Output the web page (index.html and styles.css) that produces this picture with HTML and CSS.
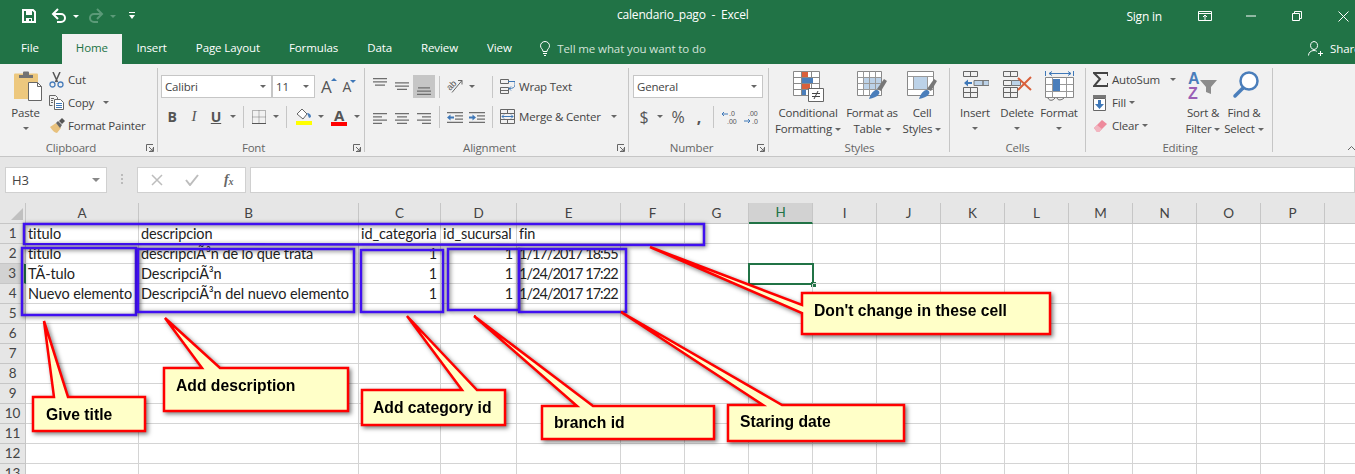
FILE: index.html
```html
<!DOCTYPE html>
<html>
<head>
    <title>calendario_pago - Excel</title>
    <link rel="stylesheet" href="styles.css">
</head>
<body>
<div class="app">
    <header class="titlebar">
        <div class="qat">
            <svg width="16" height="16" viewBox="0 0 16 16"><path class="w2" d="M2 2h10l2 2v10H2z"/><path class="wf" d="M5 2h6v5H5zM5 10h6v4H5z"/><path class="gf" d="M8 11h2v2H8z"/></svg>
            <svg class="undo" width="16" height="16" viewBox="0 0 16 16"><path class="w2" d="M2 6h8a4 4 0 0 1 0 8H6"/><path class="w2" d="M7 1L2 6l5 5"/></svg>
            <span class="caret white"></span>
            <svg class="redo" width="16" height="16" viewBox="0 0 16 16"><path class="dim2" d="M14 6H6a4 4 0 0 0 0 8h4"/><path class="dim2" d="M9 1l5 5-5 5"/></svg>
            <span class="caret dim"></span>
            <svg class="custom" width="8" height="8" viewBox="0 0 8 8"><path class="wf" d="M1 0h6v1H1zM1 3h6L4 7z"/></svg>
        </div>
        <div class="doc-title">calendario_pago &nbsp;-&nbsp; Excel</div>
        <div class="win-controls">
            <span class="signin">Sign in</span>
            <svg width="14" height="10" viewBox="0 0 14 10"><path class="w1" d="M.5.5h13v9H.5zM.5 2.500h13M7 9V4.500M5 6l2-2 2 2"/></svg>
            <svg width="10" height="2" viewBox="0 0 10 2"><path class="w1" d="M0 1h10"/></svg>
            <svg width="10" height="10" viewBox="0 0 10 10"><path class="w1" d="M.5 2.500h7v7h-7zM2.500 2.500v-2h7v7h-2"/></svg>
            <svg width="11" height="11" viewBox="0 0 11 11"><path class="w1" d="M.5.5l10 10M10.500.5l-10 10"/></svg>
        </div>
    </header>

    <nav class="tabs">
        <span class="tab file">File</span>
        <span class="tab active">Home</span>
        <span class="tab">Insert</span>
        <span class="tab">Page Layout</span>
        <span class="tab">Formulas</span>
        <span class="tab">Data</span>
        <span class="tab">Review</span>
        <span class="tab">View</span>
        <span class="tell">
            <svg width="10" height="15" viewBox="0 0 10 15"><path class="w1" d="M3 10.500C3 8 .5 7.500.5 4.800a4.500 4.300 0 0 1 9 0C9.500 7.500 7 8 7 10.500zM3 12.500h4M4 14.500h2"/></svg>
            Tell me what you want to do
        </span>
        <span class="share">
            <svg width="15" height="15" viewBox="0 0 15 15"><path class="w1" d="M6 8.500a3.500 4 0 1 1 .1 0zM.5 14.500c0-3 2.500-5 5.500-5 1 0 2 .3 2.800.8M10 12.500h5M12.500 10v5"/></svg>
            Share
        </span>
    </nav>

    <section class="ribbon">
        <div class="group g-clip">
            <div class="group-body">
                <div class="big paste">
                    <div class="big-icon">
                        <svg width="30" height="31" viewBox="0 0 30 31"><path d="M1 3.500q0-1 1-1h22q1 0 1 1V28H1z" fill="#edc87e"/><path d="M6 7V4h4V1.500q0-1 1-1h4q1 0 1 1V4h4v3z" fill="#737373"/><path d="M15.500 11.500h9l4 4v14h-13z" fill="#fff" stroke="#666"/><path class="st" d="M24.500 11.500v4h4"/></svg>
                    </div>
                    <span>Paste</span>
                    <span class="caret"></span>
                </div>
                <div class="stack">
                    <div class="row">
                        <svg class="row-icon" width="15" height="16" viewBox="0 0 15 16"><path d="M4 0l4.500 10M11 0L6.500 10" stroke="#555" stroke-width="1.500" fill="none"/><circle cx="3.500" cy="12.500" r="2.500" fill="none" stroke="#4a7ebb" stroke-width="1.300"/><circle cx="11.500" cy="12.500" r="2.500" fill="none" stroke="#4a7ebb" stroke-width="1.300"/></svg>
                        Cut
                    </div>
                    <div class="row">
                        <svg class="row-icon" width="15" height="15" viewBox="0 0 15 15"><path class="st" d="M.5.5h6l2 2v2M.5.5v10h3M2 3.500h3M2 5.500h2M2 7.500h2"/><path d="M5.500 4.500h6l3 3v7h-9z" fill="#fff" stroke="#666"/><path class="bl" d="M7 8.500h6M7 10.500h6M7 12.500h6"/></svg>
                        Copy <span class="caret spaced"></span>
                    </div>
                    <div class="row">
                        <svg class="row-icon" width="16" height="15" viewBox="0 0 16 15"><path d="M1 9l6-4 5 5-4 5c-2 0-5-3-7-6z" fill="#e8c17d"/><path d="M7 5l2-2 4 4-2 3z" fill="#666"/><path d="M10 3l3-3 3 3-3 3z" fill="#555"/></svg>
                        Format Painter
                    </div>
                </div>
            </div>
            <div class="group-foot"><span class="group-name">Clipboard</span><svg class="launcher" width="8" height="8" viewBox="0 0 8 8"><path class="st" d="M.5 7V.5H7M7.500 3v4.500H3"/><path d="M3 3l4 4M4 7h3V4" stroke="#666" fill="none"/></svg></div>
        </div>

        <div class="group g-font">
            <div class="group-body col">
                <div class="tool-row">
                    <div class="select font-name">Calibri<span class="caret"></span></div>
                    <div class="select font-size">11<span class="caret"></span></div>
                    <span class="grow">A<i class="up"></i></span>
                    <span class="shrink">A<i class="down"></i></span>
                </div>
                <div class="tool-row">
                    <span class="ic b">B</span>
                    <span class="ic it">I</span>
                    <span class="ic un">U</span>
                    <span class="caret-btn"><span class="caret"></span></span>
                    <span class="sep"></span>
                    <span class="ic"><svg width="14" height="14" viewBox="0 0 14 14"><path d="M.5.500h13v13H.5zM7 .5v13M.5 7h13" fill="none" stroke="#777" stroke-dasharray="1 1"/><path d="M0 13.500h14" stroke="#555"/></svg></span>
                    <span class="caret-btn"><span class="caret"></span></span>
                    <span class="sep"></span>
                    <span class="ic wide"><svg width="17" height="17" viewBox="0 0 17 17"><path d="M7 1l5 5-4 5-6-5z" fill="#fff" stroke="#666"/><path d="M12 5c2 0 4 1 4 4l-2 1z" fill="#4a7ebb"/><path d="M1 13h16v4H1z" fill="#ff0"/></svg></span>
                    <span class="caret-btn"><span class="caret"></span></span>
                    <span class="ic wide color">A<i></i></span>
                    <span class="caret-btn"><span class="caret"></span></span>
                </div>
            </div>
            <div class="group-foot"><span class="group-name">Font</span><svg class="launcher" width="8" height="8" viewBox="0 0 8 8"><path class="st" d="M.5 7V.5H7M7.500 3v4.500H3"/><path d="M3 3l4 4M4 7h3V4" stroke="#666" fill="none"/></svg></div>
        </div>

        <div class="group g-align">
            <div class="group-body col">
                <div class="tool-row">
                    <span class="ic"><svg width="14" height="17" viewBox="0 0 14 17"><path class="line" d="M0 .5h14M0 3.800h14M2 7.100h10"/></svg></span>
                    <span class="ic"><svg width="14" height="17" viewBox="0 0 14 17"><path class="line" d="M0 4.800h14M0 8.100h14M2 11.400h10"/></svg></span>
                    <span class="ic on"><svg width="14" height="17" viewBox="0 0 14 17"><path class="line" d="M1 9.800h12M0 13.100h14M0 16.400h14"/></svg></span>
                    <span class="sep"></span>
                    <span class="ic"><svg width="22" height="22" viewBox="-4 -4 22 22"><text class="ab" transform="translate(2 11) rotate(-45)">ab</text><path class="st" d="M4 12.500L14 .5M10 .5h4v4"/></svg></span>
                    <span class="caret-btn"><span class="caret"></span></span>
                    <span class="sep far"></span>
                    <span class="labeled">
                        <svg width="15" height="15" viewBox="0 0 15 15"><path class="st" d="M.5.500h8v4h-8zM.5 8.500h8v6h-8zM.5 11.500h8"/><path class="bl" d="M8 2.500h7M15 2.500v3c0 3-2 4-6 4M11 7.500l-2 2 2 2"/></svg>
                        Wrap Text
                    </span>
                </div>
                <div class="tool-row">
                    <span class="ic low"><svg width="14" height="11" viewBox="0 0 14 11"><path class="line" d="M0 .5h14M0 3.800h9M0 7.100h14M0 10.400h9"/></svg></span>
                    <span class="ic low"><svg width="14" height="11" viewBox="0 0 14 11"><path class="line" d="M0 .5h14M2 3.800h10M0 7.100h14M2 10.400h10"/></svg></span>
                    <span class="ic low"><svg width="14" height="11" viewBox="0 0 14 11"><path class="line" d="M0 .5h14M5 3.800h9M0 7.100h14M5 10.400h9"/></svg></span>
                    <span class="sep"></span>
                    <span class="ic low"><svg width="16" height="12" viewBox="0 0 16 12"><path class="line" d="M0 .5h16M8 3.800h8M8 7.100h8M0 10.400h16"/><path class="blf" d="M0 5.500l3.500-3v2H7v2H3.500v2z"/></svg></span>
                    <span class="ic low"><svg width="16" height="12" viewBox="0 0 16 12"><path class="line" d="M0 .5h16M8 3.800h8M8 7.100h8M0 10.400h16"/><path class="blf" d="M7 5.500l-3.500-3v2H0v2h3.500v2z"/></svg></span>
                    <span class="sep"></span>
                    <span class="labeled">
                        <svg width="15" height="15" viewBox="0 0 15 15"><path class="st" d="M.5.500h14v14H.5zM.5 4.500h14M.5 10.500h14M7.500.5v4M7.500 10.500v4"/><path class="bl" d="M2 7.500h11M4 5.500l-2 2 2 2M11 5.500l2 2-2 2"/></svg>
                        Merge &amp; Center <span class="caret spaced wide-gap"></span>
                    </span>
                </div>
            </div>
            <div class="group-foot"><span class="group-name">Alignment</span><svg class="launcher" width="8" height="8" viewBox="0 0 8 8"><path class="st" d="M.5 7V.5H7M7.500 3v4.500H3"/><path d="M3 3l4 4M4 7h3V4" stroke="#666" fill="none"/></svg></div>
        </div>

        <div class="group g-num">
            <div class="group-body col">
                <div class="tool-row">
                    <div class="select num-format">General<span class="caret"></span></div>
                </div>
                <div class="tool-row">
                    <span class="ic sym">$</span>
                    <span class="caret-btn narrow"><span class="caret"></span></span>
                    <span class="ic sym pct">%</span>
                    <span class="ic sym comma">,</span>
                    <span class="sep"></span>
                    <span class="ic"><svg width="16" height="16" viewBox="0 0 16 16"><text class="dec" x="8" y="7">.0</text><text class="dec" x="6" y="15">.00</text><path class="bl" d="M1 5h6M3 3L1 5l2 2"/></svg></span>
                    <span class="ic"><svg width="16" height="16" viewBox="0 0 16 16"><text class="dec" x="5" y="7">.00</text><text class="dec" x="9" y="15">.0</text><path class="bl" d="M1 12h6M5 10l2 2-2 2"/></svg></span>
                </div>
            </div>
            <div class="group-foot"><span class="group-name">Number</span><svg class="launcher" width="8" height="8" viewBox="0 0 8 8"><path class="st" d="M.5 7V.5H7M7.500 3v4.500H3"/><path d="M3 3l4 4M4 7h3V4" stroke="#666" fill="none"/></svg></div>
        </div>

        <div class="group g-styles">
            <div class="group-body">
                <div class="big cf">
                    <div class="big-icon">
                        <svg width="31" height="31" viewBox="0 0 31 31"><path d="M.5.5h26v24H.5zM.5 6.500h26M.5 12.500h26M.5 18.500h26M8.500.5v24M18.500.5v24" fill="#fff" stroke="#888"/><path d="M9 1h6v5H9z" fill="#d9603b"/><path d="M9 7h11v5H9z" fill="#4a7ebb"/><path d="M9 13h8v5H9z" fill="#d9603b"/><path d="M9 19h4v5H9z" fill="#4a7ebb"/><path d="M15.500 17.500h15v13h-15z" fill="#fff" stroke="#666"/><path d="M19 22.500h8M19 25.500h8M25 20l-4 8" stroke="#444" fill="none"/></svg>
                    </div>
                    <span>Conditional</span>
                    <span>Formatting<span class="caret tight"></span></span>
                </div>
                <div class="big fat">
                    <div class="big-icon">
                        <svg width="30" height="29" viewBox="0 0 30 29"><path d="M.5.5h24v24H.5z" fill="#fff" stroke="#888"/><path d="M7 6h17v13H7z" fill="#bcd2e8"/><path d="M.5 6.500h24M.5 12.500h24M.5 18.500h24M6.500.5v24M12.500.5v24M18.500.5v24" fill="none" stroke="#999"/><path d="M20 18l7-10 3 2-6 10z" fill="#777"/><path d="M19 19c3 0 4 2 3 4-2 3-6 4-10 5 1-3 3-8 7-9z" fill="#4a7ebb"/></svg>
                    </div>
                    <span>Format as</span>
                    <span>Table<span class="caret tight"></span></span>
                </div>
                <div class="big cell">
                    <div class="big-icon">
                        <svg width="30" height="29" viewBox="0 0 30 29"><path d="M.5.5h26v24H.5z" fill="#fff" stroke="#888"/><path d="M7 6h14v12H7z" fill="#bcd2e8"/><path d="M.5 5.500h26M.5 18.500h26M6.500 5.500v13M20.500 5.500v13" fill="none" stroke="#999"/><path d="M20 18l7-10 3 2-6 10z" fill="#777"/><path d="M19 19c3 0 4 2 3 4-2 3-6 4-10 5 1-3 3-8 7-9z" fill="#4a7ebb"/></svg>
                    </div>
                    <span>Cell</span>
                    <span>Styles<span class="caret tight"></span></span>
                </div>
            </div>
            <div class="group-foot"><span class="group-name">Styles</span></div>
        </div>

        <div class="group g-cells">
            <div class="group-body">
                <div class="big cellbtn">
                    <div class="big-icon">
                        <svg width="27" height="27" viewBox="0 0 27 27"><path class="st" d="M1.500.5h14v5h-14zM8.500.5v5M1.500 16.500h14v10h-14zM1.500 21.500h14M8.500 16.500v10"/><path d="M12 9.500h9v5h-9zM21 9.500h6v5h-6z" fill="#bcd2e8" stroke="#777"/><path class="blf" d="M2 12l4-3.500V11h4v2H6v2.500z"/></svg>
                    </div>
                    <span>Insert</span>
                    <span class="caret"></span>
                </div>
                <div class="big cellbtn">
                    <div class="big-icon">
                        <svg width="30" height="27" viewBox="0 0 30 27"><path class="st" d="M1.500.5h14v5h-14zM8.500.5v5M1.500 16.500h14v10h-14zM1.500 21.500h14M8.500 16.500v10M1.500 9.500h8v5h-8z"/><path d="M9.500 9.500h9v5h-9z" fill="#bcd2e8" stroke="#777"/><path d="M16 7l13 12M29 6L16 19" stroke="#d9603b" stroke-width="2" fill="none"/></svg>
                    </div>
                    <span>Delete</span>
                    <span class="caret"></span>
                </div>
                <div class="big cellbtn">
                    <div class="big-icon">
                        <svg width="29" height="32" viewBox="0 0 29 32"><path class="bl" d="M4 2.500h22M7 .5l-3 2 3 2M23 .5l3 2-3 2M.5 0v5M28.500 0v5"/><path d="M.5 6.500h28v20h-28z" fill="#fff" stroke="#888"/><path d="M.5 13.500h28M.5 20.500h28M7.500 6.500v20M21.500 6.500v20" fill="none" stroke="#999"/><path d="M8 8h7v12H8z" fill="#4a7ebb"/><path class="st" d="M3 27c1 3 5 3 7 0M12 27c1 3 5 2 7 0"/></svg>
                    </div>
                    <span>Format</span>
                    <span class="caret"></span>
                </div>
            </div>
            <div class="group-foot"><span class="group-name">Cells</span></div>
        </div>

        <div class="group g-edit">
            <div class="group-body">
                <div class="stack">
                    <div class="row">
                        <svg class="row-icon" width="15" height="15" viewBox="0 0 15 15"><path d="M15 4V1H1l6 6-6 7h14v-3" fill="none" stroke="#444" stroke-width="2"/></svg>
                        AutoSum <span class="caret spaced sum"></span>
                    </div>
                    <div class="row">
                        <svg class="row-icon" width="14" height="16" viewBox="0 0 14 16"><path d="M.5 3.500h12v12H.5z" fill="#fff" stroke="#666"/><path d="M0 0h13v3H0z" fill="#777"/><path class="blf" d="M5 5h3v4h3l-4.500 5L2 9h3z"/></svg>
                        Fill<span class="caret tight"></span>
                    </div>
                    <div class="row">
                        <svg class="row-icon" width="15" height="14" viewBox="0 0 15 14"><path d="M1 9l8-8 5 4-8 8H4z" fill="#ee8a9c"/><path d="M1 9l3-3 5 4-3 3H4z" fill="#f2b5c0"/></svg>
                        Clear<span class="caret tight"></span>
                    </div>
                </div>
                <div class="big sort">
                    <div class="big-icon">
                        <svg width="30" height="30" viewBox="0 0 30 30"><text class="az" x="0" y="13" fill="#4a7ebb">A</text><text class="az" x="0" y="28" fill="#9a5fb5">Z</text><path d="M12 9h17l-6 7v7l-5-2v-5z" fill="#8c8c8c"/></svg>
                    </div>
                    <span>Sort &amp;</span>
                    <span>Filter<span class="caret tight"></span></span>
                </div>
                <div class="big find">
                    <div class="big-icon">
                        <svg width="30" height="30" viewBox="0 0 30 30"><circle cx="20" cy="10" r="8.500" fill="#fff" stroke="#4a7ebb" stroke-width="2.500"/><path d="M14 17L6 25" stroke="#4a7ebb" stroke-width="3.500" stroke-linecap="round" fill="none"/></svg>
                    </div>
                    <span>Find &amp;</span>
                    <span>Select<span class="caret tight"></span></span>
                </div>
            </div>
            <div class="group-foot"><span class="group-name">Editing</span></div>
        </div>

        <svg class="collapse" width="9" height="6" viewBox="0 0 9 6"><path class="st" d="M1 5l3.500-3.500L8 5"/></svg>
    </section>

    <section class="formula">
        <div class="namebox">H3<span class="caret big-caret"></span></div>
        <div class="grip"></div>
        <div class="fx-box">
            <svg width="12" height="12" viewBox="0 0 12 12"><path d="M1 1l10 10M11 1L1 11" stroke="#bdbdbd" stroke-width="1.500" fill="none"/></svg>
            <svg width="14" height="12" viewBox="0 0 14 12"><path d="M1 6l4 5 8-10" stroke="#bdbdbd" stroke-width="2" fill="none"/></svg>
            <span class="fx">f<sub>x</sub></span>
        </div>
        <div class="formula-input"></div>
    </section>

    <table class="sheet">
        <colgroup>
            <col class="c-h"><col class="c-a"><col class="c-b"><col class="c-c"><col class="c-d"><col class="c-e">
            <col class="c-n"><col class="c-n"><col class="c-n"><col class="c-n"><col class="c-n"><col class="c-n">
            <col class="c-n"><col class="c-n"><col class="c-n"><col class="c-n"><col class="c-n"><col class="c-n">
        </colgroup>
        <thead>
            <tr>
                <th class="corner"><i></i></th>
                <th>A</th><th>B</th><th>C</th><th>D</th><th>E</th><th>F</th><th>G</th><th class="cur">H</th><th>I</th><th>J</th><th>K</th><th>L</th><th>M</th><th>N</th><th>O</th><th>P</th><th></th>
            </tr>
        </thead>
        <tbody>
            <tr><th>1</th><td>titulo</td><td>descripcion</td><td>id_categoria</td><td>id_sucursal</td><td>fin</td><td></td><td></td><td></td><td></td><td></td><td></td><td></td><td></td><td></td><td></td><td></td><td></td></tr>
            <tr><th>2</th><td>titulo</td><td>descripciÃ³n de lo que trata</td><td class="num">1</td><td class="num">1</td><td class="num date">1/17/2017 18:55</td><td></td><td></td><td></td><td></td><td></td><td></td><td></td><td></td><td></td><td></td><td></td><td></td></tr>
            <tr><th class="cur">3</th><td>TÃ-tulo</td><td>DescripciÃ³n</td><td class="num">1</td><td class="num">1</td><td class="num date">1/24/2017 17:22</td><td></td><td></td><td class="selected"><i></i></td><td></td><td></td><td></td><td></td><td></td><td></td><td></td><td></td><td></td></tr>
            <tr><th>4</th><td>Nuevo elemento</td><td>DescripciÃ³n del nuevo elemento</td><td class="num">1</td><td class="num">1</td><td class="num date">1/24/2017 17:22</td><td></td><td></td><td></td><td></td><td></td><td></td><td></td><td></td><td></td><td></td><td></td><td></td></tr>
            <tr><th>5</th><td></td><td></td><td></td><td></td><td></td><td></td><td></td><td></td><td></td><td></td><td></td><td></td><td></td><td></td><td></td><td></td><td></td></tr>
            <tr><th>6</th><td></td><td></td><td></td><td></td><td></td><td></td><td></td><td></td><td></td><td></td><td></td><td></td><td></td><td></td><td></td><td></td><td></td></tr>
            <tr><th>7</th><td></td><td></td><td></td><td></td><td></td><td></td><td></td><td></td><td></td><td></td><td></td><td></td><td></td><td></td><td></td><td></td><td></td></tr>
            <tr><th>8</th><td></td><td></td><td></td><td></td><td></td><td></td><td></td><td></td><td></td><td></td><td></td><td></td><td></td><td></td><td></td><td></td><td></td></tr>
            <tr><th>9</th><td></td><td></td><td></td><td></td><td></td><td></td><td></td><td></td><td></td><td></td><td></td><td></td><td></td><td></td><td></td><td></td><td></td></tr>
            <tr><th>10</th><td></td><td></td><td></td><td></td><td></td><td></td><td></td><td></td><td></td><td></td><td></td><td></td><td></td><td></td><td></td><td></td><td></td></tr>
            <tr><th>11</th><td></td><td></td><td></td><td></td><td></td><td></td><td></td><td></td><td></td><td></td><td></td><td></td><td></td><td></td><td></td><td></td><td></td></tr>
            <tr><th>12</th><td></td><td></td><td></td><td></td><td></td><td></td><td></td><td></td><td></td><td></td><td></td><td></td><td></td><td></td><td></td><td></td><td></td></tr>
            <tr><th>13</th><td></td><td></td><td></td><td></td><td></td><td></td><td></td><td></td><td></td><td></td><td></td><td></td><td></td><td></td><td></td><td></td><td></td></tr>
        </tbody>
    </table>

    <!-- annotations pasted on top of the screenshot -->
    <svg class="notes" width="1355" height="474" viewBox="0 0 1355 474">
        <g class="boxes">
            <path d="M24 224H704V245L24 244z"/>
            <path d="M22 248H136V315H22z"/>
            <path d="M138 249H354V312H138z"/>
            <path d="M361 250H443V312H361z"/>
            <path d="M448 249H519V310H448z"/>
            <path d="M519 249H626V312H519z"/>
        </g>
        <g class="callout">
            <path d="M33 397H54L44 321 68 397H145V431H33z"/>
            <text x="46" y="420">Give title</text>
        </g>
        <g class="callout">
            <path d="M164 368H202L165 318 220 368H348V411H164z"/>
            <text x="176" y="391">Add description</text>
        </g>
        <g class="callout">
            <path d="M362 390H462L407 316 477 390H505V425H362z"/>
            <text x="373" y="413">Add category id</text>
        </g>
        <g class="callout">
            <path d="M542 406H577L474 316 593 406H714V439H542z"/>
            <text x="554" y="428">branch id</text>
        </g>
        <g class="callout">
            <path d="M728 405H763L621 312 782 405H904V441H728z"/>
            <text x="740" y="427">Staring date</text>
        </g>
        <g class="callout">
            <path d="M802 293H1050V334H802V313L650 247 802 305z"/>
            <text x="814" y="316">Don't change in these cell</text>
        </g>
    </svg>
</div>
</body>
</html>
```

FILE: styles.css
```css
html, body {
    margin: 0;
    padding: 0;
    overflow: hidden;
}

.app {
    position: relative;
    width: 1355px;
    height: 474px;
    overflow: hidden;
    background-color: #e6e6e6;
    font-family: 'Open Sans', sans-serif;
    font-size: 11.5px;
    letter-spacing: -0.2px;
    color: #444;
}

svg {
    display: block;
    flex: none;
}

/* svg paint helpers */
.w1 { fill: none; stroke: #fff; stroke-width: 1; }
.w2 { fill: none; stroke: #fff; stroke-width: 2; }
.wf { fill: #fff; }
.gf { fill: #217346; }
.dim2 { fill: none; stroke: #5b9a78; stroke-width: 2; }
.st { fill: none; stroke: #666; stroke-width: 1; }
.line { fill: none; stroke: #6e6e6e; stroke-width: 1.3; }
.bl { fill: none; stroke: #3f78b8; stroke-width: 1; }
.blf { fill: #3f78b8; }

.caret {
    display: inline-block;
    width: 0;
    height: 0;
    border-left: 3px solid transparent;
    border-right: 3px solid transparent;
    border-top: 3px solid #666;
    flex: none;
}

.caret.white { border-top-color: #fff; }
.caret.dim { border-top-color: #5b9a78; }
.caret.spaced { margin-left: 9px; vertical-align: middle; }
.caret.wide-gap { margin-left: 6px; }
.caret.sum { margin-left: 10px; }
.caret.tight { margin-left: 3px; vertical-align: middle; }

/* title bar */
.titlebar {
    height: 34px;
    background-color: #217346;
    color: #fff;
    display: flex;
    align-items: center;
    justify-content: space-between;
    padding-bottom: 2px;
    box-sizing: border-box;
    position: relative;
    font-size: 12px;
}

.qat {
    display: flex;
    align-items: center;
    padding-left: 21px;
}

.undo { margin-left: 14px; }
.qat .caret { margin-left: 6px; }
.redo { margin-left: 9px; }
.custom { margin-left: 12px; }

.doc-title {
    position: absolute;
    left: 617px;
    top: 6px;
}

.win-controls {
    display: flex;
    align-items: center;
}

.signin { margin-right: 36px; }
.win-controls svg:nth-of-type(1) { margin-right: 34px; }
.win-controls svg:nth-of-type(2) { margin-right: 36px; }
.win-controls svg:nth-of-type(3) { margin-right: 36px; }
.win-controls svg:nth-of-type(4) { margin-right: 6px; }

/* tabs */
.tabs {
    height: 30px;
    background-color: #217346;
    color: #fff;
    display: flex;
    align-items: stretch;
    padding-left: 6.5px;
    position: relative;
    letter-spacing: -0.1px;
}

.tab {
    padding: 0 14.5px;
    line-height: 28px;
    height: 30px;
    box-sizing: border-box;
}

.tab.file { margin-right: 8.5px; }

.tab.active {
    background-color: #f1f1f1;
    color: #217346;
    padding: 0 14px;
}

.tell {
    display: flex;
    align-items: center;
    gap: 7px;
    margin-left: 14px;
    color: #d3e3da;
    height: 28px;
}

.share {
    position: absolute;
    left: 1308px;
    top: 0;
    height: 28px;
    display: flex;
    align-items: center;
    gap: 7px;
}

/* ribbon */
.ribbon {
    height: 93px;
    box-sizing: border-box;
    background-color: #f1f1f1;
    border-bottom: 1px solid #c6c6c6;
    display: flex;
    padding-top: 4px;
    position: relative;
}

.group {
    height: 84px;
    box-sizing: border-box;
    border-right: 1px solid #c6c6c6;
    display: flex;
    flex-direction: column;
    flex: none;
}

.g-clip { width: 158px; padding-left: 3px; }
.g-font { width: 207px; padding-left: 3px; }
.g-align { width: 264px; padding-left: 4px; }
.g-num { width: 140px; padding-left: 4px; }
.g-styles { width: 181px; padding-left: 5px; }
.g-cells { width: 136px; padding-left: 4px; }
.g-edit { width: 187px; padding-left: 6px; }

.group-body {
    height: 73px;
    flex: none;
    display: flex;
}

.group-body.col {
    flex-direction: column;
    padding-top: 7px;
    gap: 7px;
    box-sizing: border-box;
}

.group-foot {
    display: flex;
    align-items: center;
    height: 14px;
    flex: none;
    margin-left: -4px;
}

.group-name {
    flex: 1;
    text-align: center;
    color: #666;
    line-height: 14px;
}

.launcher {
    margin-right: 3px;
    margin-left: 3px;
}

.big {
    display: flex;
    flex-direction: column;
    align-items: center;
    line-height: 16px;
    flex: none;
    white-space: nowrap;
}

.big > .caret { margin-top: 6px; }

.big-icon {
    height: 37px;
    display: flex;
    align-items: flex-start;
    justify-content: center;
    box-sizing: border-box;
    padding-top: 3px;
}

.paste { width: 45px; }
.paste .big-icon { padding-left: 4px; }
.cf { width: 68px; }
.fat { width: 60px; }
.cell { width: 40px; }
.cellbtn { width: 42px; }
.sort { width: 42px; }
.find { width: 40px; }

.stack {
    display: flex;
    flex-direction: column;
    flex: none;
}

.g-edit .stack { width: 90px; }

.row {
    height: 23px;
    display: grid;
    grid-template-columns: 20px auto auto;
    justify-content: start;
    align-items: center;
    white-space: nowrap;
}

.row-icon { margin-left: 1px; }

.tool-row {
    display: flex;
    align-items: center;
    height: 23px;
    white-space: nowrap;
}

.select {
    height: 23px;
    box-sizing: border-box;
    background-color: #fff;
    border: 1px solid #c6c6c6;
    display: flex;
    align-items: center;
    justify-content: space-between;
    padding: 0 5px 0 3px;
    color: #444;
}

.font-name { width: 111px; }
.font-size { width: 43px; margin-left: 0; }
.num-format { width: 130px; }

.grow, .shrink {
    position: relative;
    color: #555;
    line-height: 1;
}

.grow { font-size: 17px; margin-left: 6px; }
.shrink { font-size: 14px; margin-left: 11px; }

.grow .up, .shrink .down {
    position: absolute;
    right: -5px;
    top: 0;
    width: 0;
    height: 0;
    border-left: 3px solid transparent;
    border-right: 3px solid transparent;
}

.grow .up { border-bottom: 3px solid #3f78b8; }
.shrink .down { border-top: 3px solid #3f78b8; }

.ic {
    width: 22px;
    height: 23px;
    display: flex;
    align-items: center;
    justify-content: center;
    flex: none;
    box-sizing: border-box;
    font-size: 14px;
    color: #555;
}

.ic.low svg { margin-top: 3px; }
.ic.on { background-color: #c6c6c6; }
.ic.wide { width: 24px; }
.b { font-weight: bold; }
.it { font-style: italic; font-family: 'Liberation Serif', serif; font-size: 15px; }
.un { text-decoration: underline; font-weight: bold; }

.color {
    flex-direction: column;
    font-weight: bold;
    font-size: 15px;
    line-height: 14px;
}

.color i {
    display: block;
    width: 16px;
    height: 4px;
    background-color: #f00;
}

.sym { font-size: 16px; }
.pct { margin-left: 2px; }
.comma { width: 20px; font-weight: bold; }

.caret-btn {
    width: 12px;
    display: flex;
    justify-content: center;
    flex: none;
}

.caret-btn.narrow { width: 10px; }

.sep {
    width: 1px;
    height: 22px;
    background-color: #c6c6c6;
    margin: 0 4px;
    flex: none;
}

.sep.far { margin-left: 14px; }

.labeled {
    display: flex;
    align-items: center;
    gap: 4px;
    margin-left: 3px;
}

.dec {
    font-size: 7px;
    letter-spacing: 0;
    fill: #555;
    font-family: 'Liberation Sans', sans-serif;
}

.ab {
    font-size: 9px;
    letter-spacing: 0;
    fill: #555;
    font-family: 'Liberation Sans', sans-serif;
}

.az {
    font-size: 16px;
    font-weight: bold;
    font-family: 'Liberation Sans', sans-serif;
}

.collapse {
    position: absolute;
    left: 1347px;
    top: 81px;
}

/* formula bar */
.formula {
    height: 46px;
    box-sizing: border-box;
    padding: 10px 0 10px 5px;
    display: flex;
    align-items: stretch;
}

.namebox, .fx-box, .formula-input {
    background-color: #fff;
    border: 1px solid #d0d0d0;
    box-sizing: border-box;
}

.namebox {
    width: 102px;
    display: flex;
    align-items: center;
    justify-content: space-between;
    padding: 0 6px;
    font-size: 13px;
}

.big-caret {
    border-left-width: 4px;
    border-right-width: 4px;
    border-top-width: 4px;
    border-top-color: #888;
}

.grip {
    width: 2px;
    height: 12px;
    margin: 7px 14px 0;
    background-image: repeating-linear-gradient(#bbb 0 2px, transparent 2px 4px);
}

.fx-box {
    width: 109px;
    display: flex;
    align-items: center;
    gap: 22px;
    padding-left: 13px;
}

.fx {
    margin-left: 3px;
    font-family: 'Liberation Serif', serif;
    font-style: italic;
    font-weight: bold;
    font-size: 14px;
    color: #666;
}

.fx sub {
    font-size: 10px;
    vertical-align: -1px;
    line-height: 0;
}

.formula-input {
    flex: 1;
    margin-left: 4px;
    margin-right: 0;
}

/* sheet */
.sheet {
    table-layout: fixed;
    width: 1389px;
    border-collapse: separate;
    border-spacing: 0;
    background-color: #fff;
    font-family: Lato, sans-serif;
    font-size: 14.5px;
    letter-spacing: -0.1px;
    color: #222;
}

.c-h { width: 26px; }
.c-a { width: 113px; }
.c-b { width: 220px; }
.c-c { width: 82px; }
.c-d { width: 76px; }
.c-e { width: 104px; }
.c-n { width: 64px; }

.sheet th, .sheet td {
    height: 20px;
    padding: 0;
    box-sizing: border-box;
    border-right: 1px solid #d4d4d4;
    border-bottom: 1px solid #d4d4d4;
    overflow: hidden;
    white-space: nowrap;
    line-height: 19px;
}

.sheet td { padding: 0 3px 0 2px; position: relative; }
.sheet td.num { text-align: right; overflow: visible; }
.sheet td.date { letter-spacing: -0.95px; }

.sheet th {
    background-color: #e6e6e6;
    font-weight: normal;
    font-size: 13.5px;
    color: #444;
    border-color: #c6c6c6;
    text-align: center;
}

.sheet th.cur {
    background-color: #d2d2d2;
    color: #217346;
}

.sheet thead th.cur { border-bottom: 2px solid #217346; }
.sheet tbody th.cur { border-right: 2px solid #217346; color: #444; }

.corner { position: relative; }

.corner i {
    position: absolute;
    right: 2px;
    bottom: 3px;
    width: 0;
    height: 0;
    border-left: 12px solid transparent;
    border-bottom: 12px solid #c0c0c0;
}

.sheet td.selected {
    overflow: visible;
    outline: 2px solid #217346;
    outline-offset: -1px;
}

.selected i {
    position: absolute;
    right: -4px;
    bottom: -4px;
    width: 5px;
    height: 5px;
    background-color: #217346;
}

/* annotations */
.notes {
    position: absolute;
    left: 0;
    top: 0;
}

.boxes path {
    fill: none;
    stroke: #4010f0;
    stroke-width: 2.5px;
    filter: drop-shadow(1px 1px 2px rgba(0, 0, 0, 0.6));
}

.callout {
    filter: drop-shadow(2px 2px 2px rgba(0, 0, 0, 0.5));
}

.callout path {
    fill: #ffffc8;
    stroke: #f00;
    stroke-width: 2.5px;
}

.callout text {
    font-family: 'Liberation Sans', sans-serif;
    font-weight: bold;
    font-size: 15.7px;
    letter-spacing: 0;
    fill: #000;
}
```
